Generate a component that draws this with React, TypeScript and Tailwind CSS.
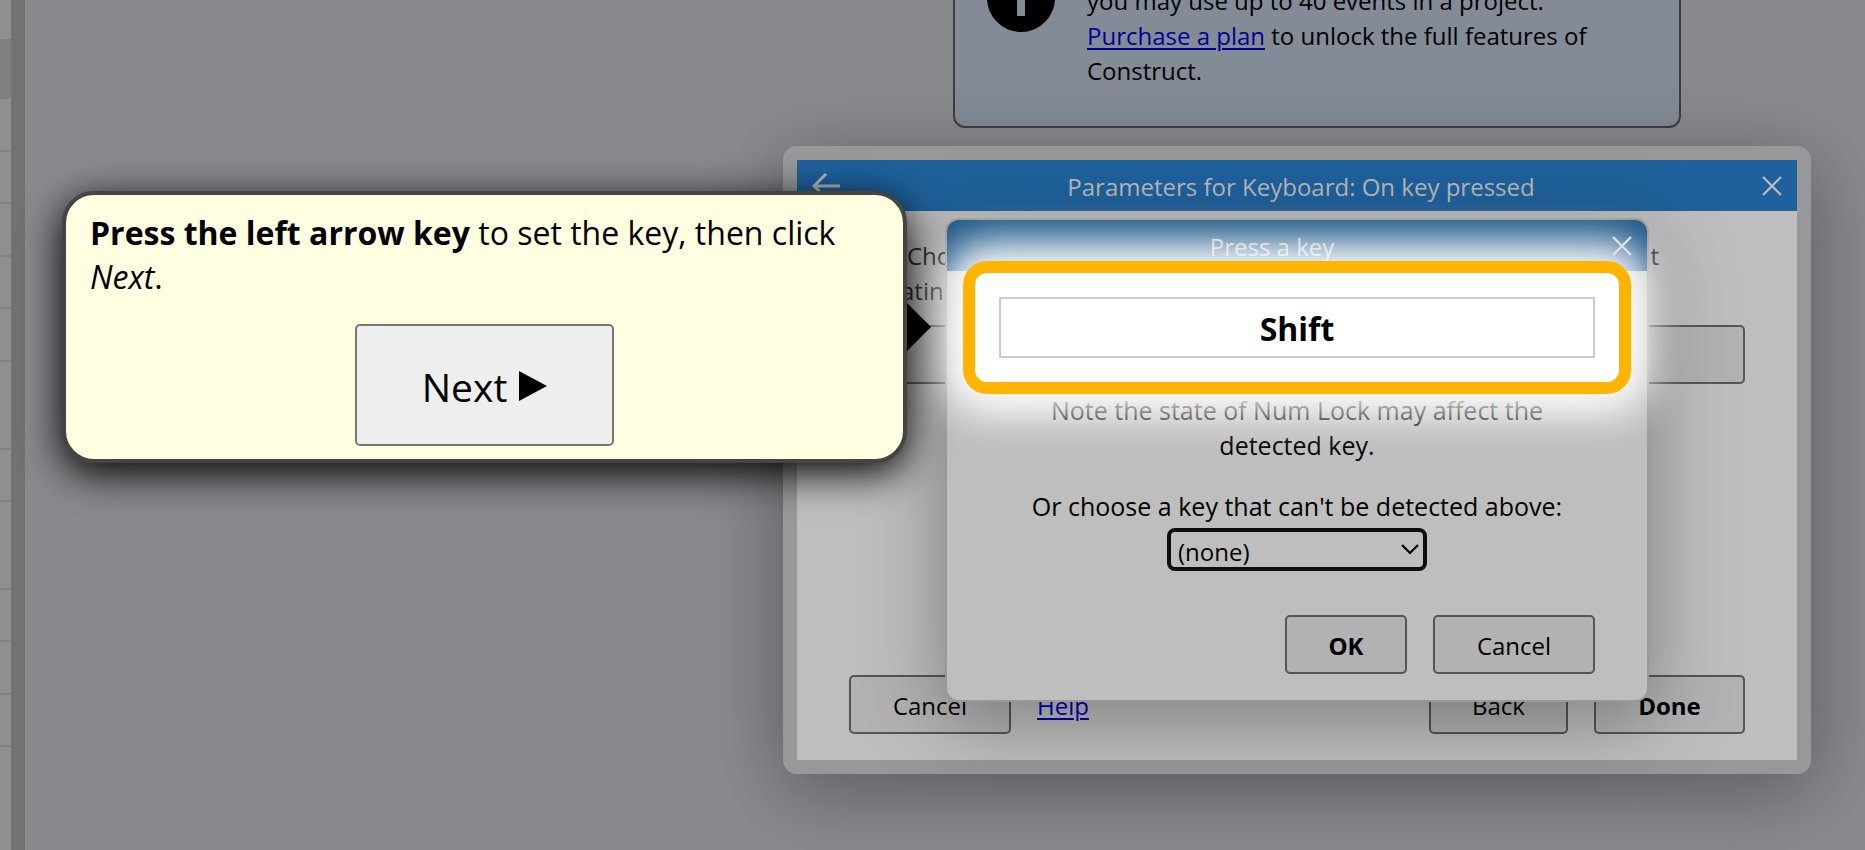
import React from "react";

const rows: { height: string; selected?: boolean }[] = [
  { height: "h-[39px]" },
  { height: "h-[60px]", selected: true },
  { height: "h-[53px] border-b-2" },
  { height: "h-[52px] border-b-2" },
  { height: "h-[53px] border-b-2" },
  { height: "h-[52px] border-b-2" },
  { height: "h-[53px] border-b-2" },
  { height: "h-[88px] border-b-2" },
  { height: "h-[52px] border-b-2" },
  { height: "h-[88px] border-b-2" },
  { height: "h-[52px] border-b-2" },
  { height: "h-[53px] border-b-2" },
  { height: "h-[52px] border-b-2" },
];

function CloseIcon({ className }: { className: string }) {
  return (
    <svg viewBox="0 0 20 20" className={`h-5 w-5 ${className}`} fill="none" stroke="currentColor" strokeWidth="2.2">
      <path d="M1 1 19 19M19 1 1 19" />
    </svg>
  );
}

function Button({ children, className = "" }: { children: React.ReactNode; className?: string }) {
  return (
    <button
      type="button"
      className={`h-[59px] rounded-[5px] border-2 border-[#555555] bg-[#b2b2b2] pt-0.5 text-center ${className}`}
    >
      {children}
    </button>
  );
}

function PlanNotice() {
  return (
    <section className="-mt-20 flex w-[728px] gap-8 rounded-xl border-2 border-[#3f3f3f] bg-[#838b96] pt-[61px] pr-8 pb-[38px] pl-8">
      <svg viewBox="0 0 68 68" className="mt-[-19px] h-[68px] w-[68px] shrink-0" aria-hidden="true">
        <circle cx="34" cy="34" r="34" fill="#000" />
        <circle cx="34" cy="15" r="5" fill="#838b96" />
        <rect x="30" y="25" width="8" height="27" fill="#838b96" />
      </svg>
      <p className="whitespace-nowrap">
        you may use up to 40 events in a project.
        <br />
        <a href="#purchase" className="text-[#00009a] underline decoration-2 underline-offset-3">
          Purchase a plan
        </a>{" "}
        to unlock the full features of
        <br />
        Construct.
      </p>
    </section>
  );
}

function ParametersDialog() {
  return (
    <section
      aria-label="Parameters for Keyboard: On key pressed"
      className="absolute top-[146px] left-[783px] flex h-[628px] w-[1028px] flex-col rounded-[14px] border-[14px] border-[#989898] shadow-[0_16px_80px_rgba(0,0,0,0.35)]"
    >
      <header className="flex h-[51px] items-center bg-[#1f619c] text-[#b9b9b9]">
        <button type="button" aria-label="Back" className="flex w-[58px] justify-center">
          <svg viewBox="0 0 28 26" className="h-[26px] w-7" fill="none" stroke="currentColor" strokeWidth="3">
            <path d="M28 13H2M14 1 2 13l12 12" />
          </svg>
        </button>
        <h2 className="flex-1 pt-0.5 text-center">Parameters for Keyboard: On key pressed</h2>
        <button type="button" aria-label="Close" className="flex w-[50px] justify-center">
          <CloseIcon className="text-[#bdbdbd]" />
        </button>
      </header>
      <div className="flex flex-1 flex-col bg-[#bebebe] px-[52px] pt-[27px] pb-[26px]">
        <div className="flex justify-between pr-[86px] pl-[58px] text-[#222222]">
          <span>Cho</span>
          <span>nt</span>
        </div>
        <div className="pl-[52px] text-[#222222]">atin</div>
        <button
          type="button"
          aria-label="Key"
          className="mt-[17px] h-[59px] rounded-[5px] border-2 border-[#555555] bg-[#b2b2b2]"
        />
        <footer className="mt-auto flex items-center gap-[26px]">
          <Button className="w-[162px]">Cancel</Button>
          <a href="#help" className="pt-0.5 text-[#0000b8] underline decoration-2 underline-offset-3">
            Help
          </a>
          <Button className="ml-auto w-[139px]">Back</Button>
          <Button className="w-[151px] font-bold">Done</Button>
        </footer>
      </div>
    </section>
  );
}

function KeyDialog() {
  return (
    <section
      aria-label="Press a key"
      className="absolute top-[218px] left-[945px] flex h-[484px] w-[704px] flex-col rounded-[14px] border-2 border-[#999999] bg-[#bebebe] shadow-[0_16px_80px_rgba(0,0,0,0.35)]"
    >
      <header className="flex h-[51px] items-center rounded-t-xl bg-[#1a5585] text-[#bfbfbf]">
        <h2 className="flex-1 pt-0.5 text-center">Press a key</h2>
        <button type="button" aria-label="Close" className="flex w-[50px] justify-center">
          <CloseIcon className="relative z-20 text-[#e2e2e2]" />
        </button>
      </header>
      <div className="flex flex-1 flex-col px-[52px] py-[26px]">
        <div className="relative">
          <div className="absolute -inset-9 rounded-3xl border-[12px] border-[#ffb400] bg-white shadow-[0_0_40px_20px_#ffffff]" />
          <input
            aria-label="Pressed key"
            readOnly
            value="Shift"
            className="relative block h-[61px] w-full border-2 border-[#cccccc] bg-white pt-0.5 text-center text-[32px] font-bold outline-none"
          />
        </div>
        <p className="mt-[35px] text-center text-[25px]">
          Note the state of Num Lock may affect the
          <br />
          detected key.
        </p>
        <label htmlFor="other-key" className="mt-[26px] text-center text-[25px]">
          Or choose a key that can't be detected above:
        </label>
        <div className="relative mx-auto mt-1 w-[260px]">
          <select
            id="other-key"
            className="block h-[43px] w-full appearance-none rounded-lg border-4 border-[#0d0d0d] bg-[#bebebe] px-[7px] pt-0.5 outline-none"
          >
            <option>(none)</option>
          </select>
          <svg
            viewBox="0 0 18 11"
            className="pointer-events-none absolute top-4 right-2 h-[11px] w-[18px]"
            fill="none"
            stroke="#000"
            strokeWidth="2.2"
          >
            <path d="M1 1l8 8 8-8" />
          </svg>
        </div>
        <footer className="mt-auto flex justify-end gap-[26px]">
          <Button className="w-[122px] font-bold">OK</Button>
          <Button className="w-[162px]">Cancel</Button>
        </footer>
      </div>
    </section>
  );
}

function TutorialTip() {
  return (
    <aside className="absolute top-[191px] left-[62px] h-[272px] w-[845px] rounded-[32px] border-4 border-[#444444] bg-[#fffee0] px-6 pt-4 shadow-[0_10px_40px_#000000]">
      <p className="text-[32px] leading-[44px]">
        <b>Press the left arrow key</b> to set the key, then click <i>Next</i>.
      </p>
      <button
        type="button"
        className="mx-auto mt-[25px] flex h-[122px] w-[259px] items-center justify-center gap-3 rounded-[5px] border-2 border-[#777777] bg-[#eeeeee] pt-0.5 text-[39px]"
      >
        Next
        <svg viewBox="0 0 28 30" className="h-[30px] w-7" aria-hidden="true">
          <path d="M0 0 28 15 0 30z" />
        </svg>
      </button>
      <svg viewBox="0 0 24 48" className="absolute top-[108px] -right-7 h-12 w-6" aria-hidden="true">
        <path d="M0 0 24 24 0 48z" />
      </svg>
    </aside>
  );
}

export default function App() {
  return (
    <div className="relative flex h-screen overflow-hidden bg-[#8a898e] font-['Open_Sans','Noto_Sans',sans-serif] text-[24px] leading-[35px] text-black">
      <nav aria-label="Project" className="w-[11px] shrink-0 bg-[#8f8f8f]">
        {rows.map((row, i) => (
          <div key={i} className={`border-[#828282] ${row.height} ${row.selected ? "bg-[#808080]" : ""}`} />
        ))}
      </nav>
      <div className="w-[14px] shrink-0 bg-[#727272]" />
      <main className="flex-1 pl-[928px]">
        <PlanNotice />
      </main>
      <ParametersDialog />
      <KeyDialog />
      <TutorialTip />
    </div>
  );
}
